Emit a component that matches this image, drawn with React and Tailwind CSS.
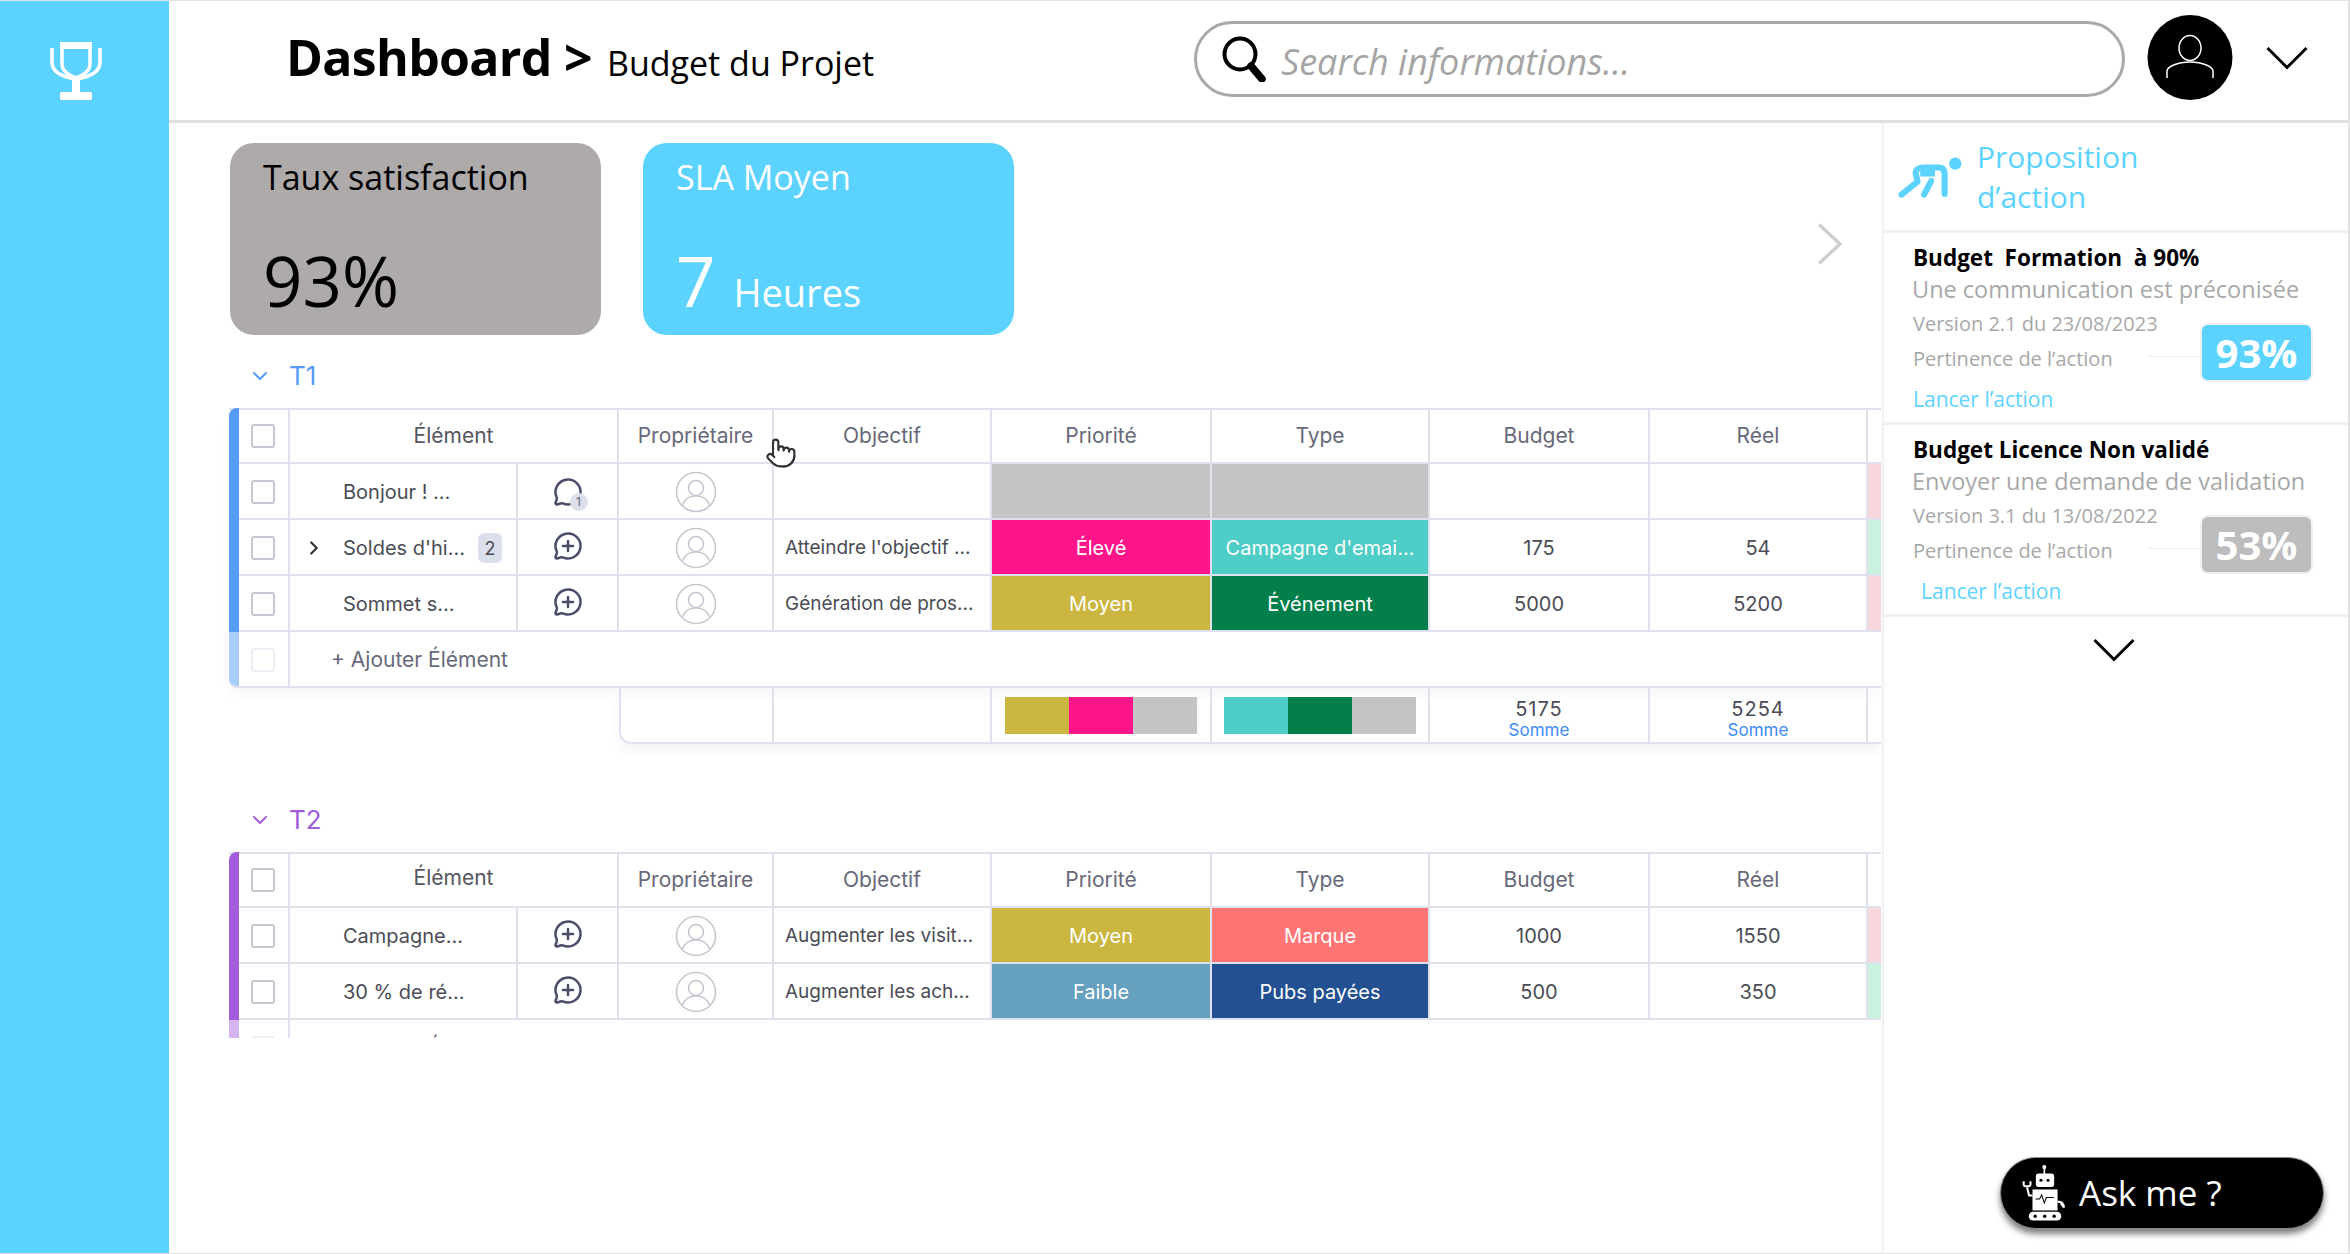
import { MessageCircle, MessageCirclePlus, ChevronRight, ChevronDown, Pointer } from 'lucide-react'

const t1Rows = [
  { name: 'Bonjour ! ...', comment: 1, goal: '', priority: { label: '', bg: 'bg-[#c4c4c4]' }, type: { label: '', bg: 'bg-[#c4c4c4]' }, budget: '', real: '', status: 'bg-[#f7d7dc]' },
  { name: "Soldes d'hi...", expand: true, count: 2, goal: "Atteindre l'objectif ...", priority: { label: 'Élevé', bg: 'bg-[#ff158a]' }, type: { label: "Campagne d'emai...", bg: 'bg-[#4eccc6]' }, budget: '175', real: '54', status: 'bg-[#c9f2df]' },
  { name: 'Sommet s...', goal: 'Génération de pros...', priority: { label: 'Moyen', bg: 'bg-[#cab641]' }, type: { label: 'Événement', bg: 'bg-[#037f4c]' }, budget: '5000', real: '5200', status: 'bg-[#f7d7dc]' },
]

const t2Rows = [
  { name: 'Campagne...', goal: 'Augmenter les visit...', priority: { label: 'Moyen', bg: 'bg-[#cab641]' }, type: { label: 'Marque', bg: 'bg-[#ff7575]' }, budget: '1000', real: '1550', status: 'bg-[#f7d7dc]' },
  { name: '30 % de ré...', goal: 'Augmenter les ach...', priority: { label: 'Faible', bg: 'bg-[#66a0bf]' }, type: { label: 'Pubs payées', bg: 'bg-[#225091]' }, budget: '500', real: '350', status: 'bg-[#c9f2df]' },
]

const rowGrid = 'grid grid-cols-[10px_51px_228px_101px_155px_218px_220px_218px_220px_218px_13px]'
const cell = 'flex items-center justify-center border-r-2 border-[#dfe1ee] min-w-0'
const rowCell = `${cell} pt-[2px]`

function Trophy() {
  return (
    <svg width="52" height="58" viewBox="0 0 52 58" fill="none">
      <rect x="10" y="0" width="32" height="7" fill="white" />
      <path d="M2 6v14c0 10 10 15 24 17c14-2 24-7 24-17V6" stroke="white" strokeWidth="3.5" />
      <path d="M12 6v16c0 6 6 11 14 14c8-3 14-8 14-14V6" stroke="white" strokeWidth="3.5" />
      <rect x="22" y="36" width="8" height="16" fill="white" />
      <rect x="10" y="50" width="32" height="8" rx="2" fill="white" />
    </svg>
  )
}

function SearchGlyph() {
  return (
    <svg width="44" height="46" viewBox="0 0 44 46" fill="none">
      <circle cx="18" cy="18" r="15.500" stroke="black" strokeWidth="4" />
      <path d="M29 30l11 13" stroke="black" strokeWidth="7.500" strokeLinecap="round" />
    </svg>
  )
}

function AvatarGlyph() {
  return (
    <svg width="86" height="85" viewBox="0 0 86 85">
      <circle cx="43" cy="42.500" r="42.500" fill="black" />
      <ellipse cx="43" cy="33" rx="11" ry="12.500" fill="none" stroke="white" strokeWidth="1.500" />
      <path d="M20 63V56c0-4 10-9 23-9s23 5 23 9v7" fill="none" stroke="white" strokeWidth="1.500" />
    </svg>
  )
}

function Runner() {
  return (
    <svg width="66" height="44" viewBox="80 95 205 135" fill="none">
      <circle cx="261" cy="118" r="19" fill="#5cd3ff" />
      <path d="M228 212V150c0-14-8-20-20-20h-46c-14 0-24 6-24 18l6 26l-50 40" stroke="#5cd3ff" strokeWidth="19" strokeLinecap="round" strokeLinejoin="round" />
      <path d="M152 142h46" stroke="#5cd3ff" strokeWidth="32" />
      <path d="M186 172l-22 42" stroke="#5cd3ff" strokeWidth="19" strokeLinecap="round" />
    </svg>
  )
}

function Robot() {
  return (
    <svg width="44" height="56" viewBox="185 100 130 165" fill="none">
      <circle cx="251" cy="106" r="6" fill="white" />
      <path d="M251 106v20" stroke="white" strokeWidth="5" />
      <rect x="226" y="125" width="54" height="40" rx="8" fill="white" />
      <circle cx="241" cy="145" r="4.500" fill="black" />
      <circle cx="262" cy="145" r="4.500" fill="black" />
      <rect x="216" y="172" width="74" height="62" fill="white" />
      <path d="M225 200h12l6-12l8 24l6-16h22" stroke="black" strokeWidth="3" />
      <path d="M216 190h-10l-6-24M190 148v10c0 6 20 6 20 0v-10" stroke="white" strokeWidth="6" />
      <path d="M290 208c14 0 18 8 18 18M300 214l10 10" stroke="white" strokeWidth="7" />
      <rect x="205" y="238" width="96" height="26" rx="13" fill="white" />
      <circle cx="224" cy="251" r="5" fill="black" />
      <circle cx="252" cy="251" r="5" fill="black" />
      <circle cx="280" cy="251" r="5" fill="black" />
    </svg>
  )
}

function OwnerIcon() {
  return (
    <svg width="42" height="42" viewBox="0 0 42 42" fill="none" stroke="#c5c7d0" strokeWidth="1.600">
      <circle cx="21" cy="21" r="19.500" />
      <circle cx="21" cy="17" r="7.500" />
      <path d="M7.500 34c2-6 7-9 13.500-9s11.500 3 13.500 9" />
    </svg>
  )
}

function Checkbox({ faded }) {
  return <span className={`block h-6 w-6 rounded-[3px] border-2 bg-white ${faded ? 'border-[#eceef5]' : 'border-[#c5c7d0]'}`} />
}

function Group({ label, text, bar, rows, headerOffset, shadow, children }) {
  return (
    <section>
      <div className={`flex h-7 items-center ${text}`}>
        <ChevronDown size={24} strokeWidth={2} className="ml-[18px]" />
        <span className="-mt-[2px] ml-[17px] text-[26px]">{label}</span>
      </div>
      <div className={`-ml-px mt-[18px] w-[1652px] rounded-l-lg ${shadow}`}>
        <div className={`${rowGrid} h-[56px] border-y-2 border-[#dfe1ee] text-[21px] text-[#676879]`}>
          <div className={`${bar} -my-[2px] rounded-tl-lg`} />
          <div className={`${cell} pr-[2px]`}><Checkbox /></div>
          <div className={`${cell} col-span-2 text-[#55565f] ${headerOffset}`}>Élément</div>
          <div className={cell}>Propriétaire</div>
          <div className={cell}>Objectif</div>
          <div className={cell}>Priorité</div>
          <div className={cell}>Type</div>
          <div className={cell}>Budget</div>
          <div className={cell}>Réel</div>
          <div />
        </div>
        {rows.map(row => (
          <div key={row.name} className={`${rowGrid} h-[56px] border-b-2 border-[#dfe1ee] text-[20px] text-[#4b4c55]`}>
            <div className={`${bar} -mb-[2px]`} />
            <div className={`${rowCell} pr-[2px]`}><Checkbox /></div>
            <div className={`${rowCell} relative !justify-start pl-[53px]`}>
              {row.expand && <ChevronRight size={22} strokeWidth={2.4} className="absolute left-[13px] text-[#323338]" />}
              <span className="truncate">{row.name}</span>
              {row.count && <span className="absolute right-[14px] flex h-[30px] w-6 items-center justify-center rounded-md bg-[#dcdfec] text-[18px]">{row.count}</span>}
            </div>
            <div className={rowCell}>
              {row.comment ? (
                <span className="relative block">
                  <MessageCircle size={30} strokeWidth={2} className="text-[#4b4e69]" />
                  <span className="absolute -bottom-[4px] -right-[5px] flex h-[18px] w-[18px] items-center justify-center rounded-full bg-[#dcdfec] text-[12px] text-[#676879]">1</span>
                </span>
              ) : (
                <MessageCirclePlus size={30} strokeWidth={2} className="-mt-1 text-[#4b4e69]" />
              )}
            </div>
            <div className={rowCell}><OwnerIcon /></div>
            <div className={`${rowCell} !justify-start pl-[11px] text-[19px]`}><span className="truncate">{row.goal}</span></div>
            <div className={`${rowCell} ${row.priority.bg} text-white`}>{row.priority.label}</div>
            <div className={`${rowCell} ${row.type.bg} text-white`}><span className="truncate">{row.type.label}</span></div>
            <div className={rowCell}>{row.budget}</div>
            <div className={rowCell}>{row.real}</div>
            <div className={`${row.status}`} />
          </div>
        ))}
        {children}
      </div>
    </section>
  )
}

function AddRow({ barLight, clipped }) {
  return (
    <div className={`flex overflow-hidden ${clipped ? 'h-[18px]' : 'h-[56px] rounded-bl-lg border-b-2 border-[#dfe1ee]'}`}>
      <div className={`${barLight} w-[10px] shrink-0`} />
      <div className="flex h-[56px] w-[51px] shrink-0 items-center justify-center border-r-2 border-[#dfe1ee] pr-[2px]"><Checkbox faded /></div>
      <div className="flex h-[56px] items-center pl-[41px] text-[21px] text-[#676879]">+ Ajouter Élément</div>
    </div>
  )
}

function Summary() {
  return (
    <div className="ml-[389px] grid h-[56px] w-[1262px] grid-cols-[153px_218px_220px_218px_220px_218px_13px] rounded-bl-xl border-b-2 border-l-2 border-[#dfe1ee] shadow-[0_8px_12px_rgba(0,0,0,0.04)]">
      <div className={cell} />
      <div className={cell} />
      <div className={cell}>
        <div className="flex h-[37px] w-[193px]">
          <span className="flex-1 bg-[#cab641]" />
          <span className="flex-1 bg-[#ff158a]" />
          <span className="flex-1 bg-[#c4c4c4]" />
        </div>
      </div>
      <div className={cell}>
        <div className="flex h-[37px] w-[192px]">
          <span className="flex-1 bg-[#4eccc6]" />
          <span className="flex-1 bg-[#037f4c]" />
          <span className="flex-1 bg-[#c4c4c4]" />
        </div>
      </div>
      {['5175', '5254'].map(total => (
        <div key={total} className={`${cell} flex-col pt-[7px]`}>
          <span className="text-[20px] leading-[22px] tracking-[0.05em] text-[#4b4c55]">{total}</span>
          <span className="text-[17px] leading-[20px] text-[#3f8cf2]">Somme</span>
        </div>
      ))}
      <div />
    </div>
  )
}

function ActionCard({ title, text, version, score, badge, linkOffset }) {
  return (
    <article className="h-[192px] border-b-[3px] border-[#f1f1f3] pl-[29px] pt-[10px] font-['Open_Sans',sans-serif]">
      <h3 className="whitespace-pre text-[22.5px] font-bold leading-[30px] text-black">{title}</h3>
      <p className="-ml-px mt-[2px] whitespace-nowrap text-[23.5px] leading-[28px] text-[#a8a8a8]">{text}</p>
      <div className="mt-[6px] flex">
        <div className="w-[235px] shrink-0">
          <p className="whitespace-nowrap text-[20px] leading-[30px] text-[#a8a8a8]">{version}</p>
          <p className="mt-[5px] whitespace-nowrap text-[20px] leading-[30px] text-[#a8a8a8]">Pertinence de l’action</p>
          <a className={`mt-[10px] block text-[21px] leading-[30px] text-[#5cd3ff] ${linkOffset}`}>Lancer l’action</a>
        </div>
        <span className="mt-[47px] h-px w-[54px] bg-[#efefef]" />
        <span className={`mt-[16px] flex h-[55px] w-[109px] items-center justify-center rounded-md text-[40px] font-bold text-white ring-2 ring-[#f1f1f3] ${badge}`}>{score}</span>
      </div>
    </article>
  )
}

export default function App() {
  return (
    <div className="relative flex h-[1254px] w-[2350px] overflow-hidden border-y border-r-2 border-[#e2e2e2] bg-white font-['Inter',sans-serif]">
      <aside className="w-[169px] shrink-0 bg-[#5cd3ff] pl-[50px] pt-[41px]">
        <Trophy />
      </aside>

      <div className="flex min-w-0 flex-1 flex-col font-['Open_Sans',sans-serif]">
        <header className="flex h-[122px] shrink-0 items-center border-b-[3px] border-[#e0e0e0]">
          <h1 className="-mt-[7px] ml-[117px] flex w-[908px] shrink-0 items-baseline font-bold text-black">
            <span className="text-[50px] tracking-[-0.7px]">Dashboard &gt;</span>
            <span className="ml-[15px] text-[34px] font-normal">Budget du Projet</span>
          </h1>
          <div className="-mt-1 flex h-[76px] w-[931px] shrink-0 items-center rounded-[38px] border-[3px] border-[#a9a9a9] pl-[25px]">
            <SearchGlyph />
            <span className="ml-[15px] pt-[6px] text-[36px] italic text-[#a5a5a5]">Search informations...</span>
          </div>
          <div className="-mt-[6px] ml-[22px] shrink-0"><AvatarGlyph /></div>
          <svg width="42" height="24" viewBox="0 0 42 24" fill="none" className="-mt-[6px] ml-[33px] shrink-0">
            <path d="M1.500 2L21 21.500L40.500 2" stroke="black" strokeWidth="3" />
          </svg>
        </header>

        <div className="flex min-h-0 flex-1">
          <main className="min-w-0 flex-1 overflow-hidden pl-[61px] pt-[20px] font-['Inter',sans-serif]">
            <div className="flex items-center font-['Open_Sans',sans-serif]">
              <div className="h-[192px] w-[371px] rounded-[24px] bg-[#aeaaaa] pl-[33px] pt-[12px] text-black">
                <p className="text-[34px] leading-[44px]">Taux satisfaction</p>
                <p className="mt-[36px] text-[69px] leading-[90px]">93%</p>
              </div>
              <div className="ml-[42px] h-[192px] w-[371px] rounded-[24px] bg-[#5cd3ff] pl-[33px] pt-[12px] text-white">
                <p className="text-[34px] leading-[44px]">SLA Moyen</p>
                <p className="mt-[36px] leading-[90px]">
                  <span className="text-[69px]">7</span>
                  <span className="ml-[18px] text-[38px]">Heures</span>
                </p>
              </div>
              <svg width="26" height="42" viewBox="0 0 26 42" fill="none" className="ml-[803px] mt-[9px]">
                <path d="M2 1.500L23 21L2 40.500" stroke="#cfcfcf" strokeWidth="3.500" />
              </svg>
            </div>

            <div className="mt-[27px]">
              <Group label="T1" text="text-[#579bfc]" bar="bg-[#579bfc]" rows={t1Rows} shadow="shadow-[0_8px_12px_rgba(0,0,0,0.03)]">
                <AddRow barLight="bg-[#a9cdfd]" />
              </Group>
              <Summary />
            </div>

            <div className="mt-[62px]">
              <Group label="T2" text="text-[#a25ddc]" bar="bg-[#a25ddc]" rows={t2Rows} headerOffset="pb-1">
                <AddRow barLight="bg-[#d5b3f0]" clipped />
              </Group>
            </div>
          </main>

          <aside className="w-[466px] shrink-0 border-l-2 border-[#f1f1f3]">
            <div className="flex h-[110px] items-start border-b-[3px] border-[#f1f1f3] pl-[13px] font-['Open_Sans',sans-serif]">
              <div className="mt-[33px]"><Runner /></div>
              <h2 className="ml-[14px] mt-[14px] text-[30px] leading-[40px] text-[#5cd3ff]">Proposition<br />d’action</h2>
            </div>
            <ActionCard title="Budget  Formation  à 90%" text="Une communication est préconisée" version="Version 2.1 du 23/08/2023" score="93%" badge="bg-[#5cd3ff]" />
            <ActionCard title="Budget Licence Non validé" text="Envoyer une demande de validation" version="Version 3.1 du 13/08/2022" score="53%" badge="bg-[#bdbdbd]" linkOffset="pl-2" />
            <svg width="42" height="24" viewBox="0 0 42 24" fill="none" className="ml-[209px] mt-[21px]">
              <path d="M1.500 2L21 21.500L40.500 2" stroke="black" strokeWidth="3" />
            </svg>
          </aside>
        </div>
      </div>

      <Pointer size={32} strokeWidth={1.6} fill="white" className="absolute left-[765px] top-[436px] text-[#333]" />

      <button className="absolute left-[2000px] top-[1156px] flex h-[72px] w-[324px] items-center rounded-[36px] border border-[#8a8a8a] bg-black pl-[21px] font-['Open_Sans',sans-serif] text-[35px] text-white shadow-[0_5px_6px_rgba(0,0,0,0.5)]">
        <Robot />
        <span className="ml-[13px]">Ask me ?</span>
      </button>
    </div>
  )
}
